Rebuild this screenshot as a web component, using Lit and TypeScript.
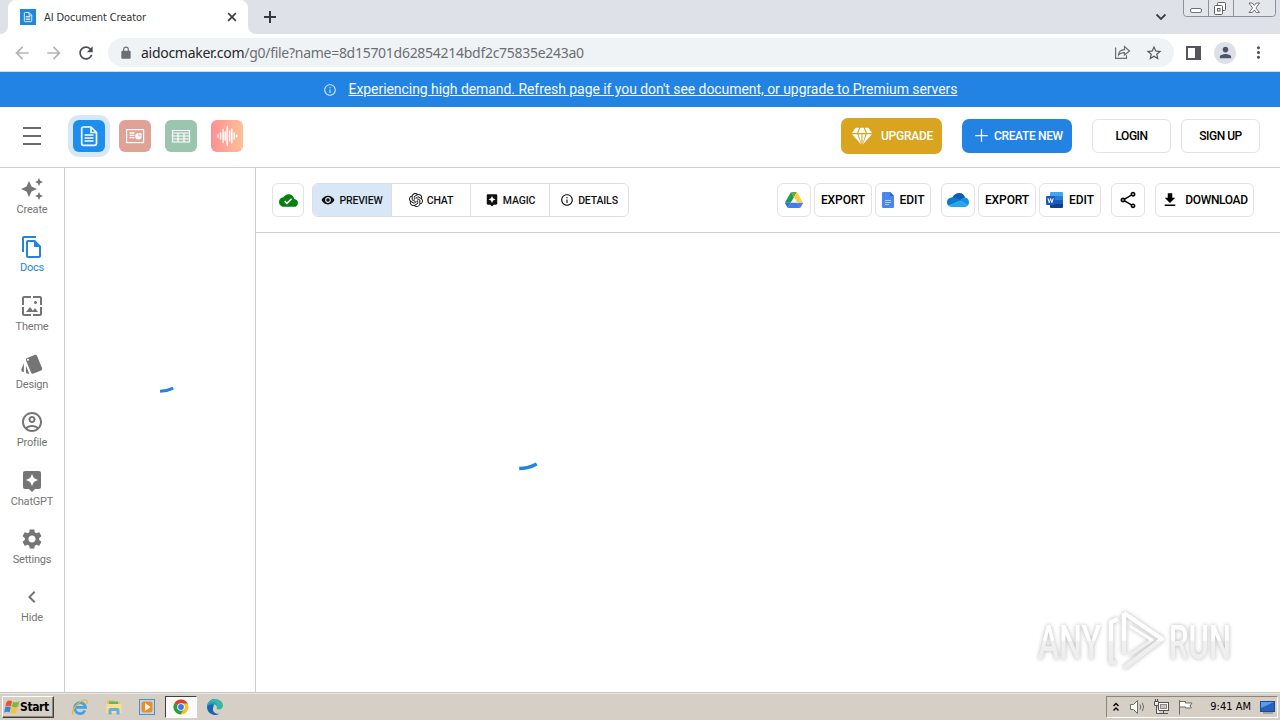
import { LitElement, html, css, svg, TemplateResult } from 'lit';
import { customElement, property } from 'lit/decorators.js';
import { classMap } from 'lit/directives/class-map.js';

const paths: Record<string, string> = {
  create:
    'M19 9l1.25-2.75L23 5l-2.75-1.25L19 1l-1.25 2.75L15 5l2.75 1.25L19 9zm-7.5.5L9 4 6.5 9.5 1 12l5.5 2.5L9 20l2.5-5.5L17 12l-5.5-2.5zM19 15l-1.25 2.75L15 19l2.75 1.25L19 23l1.25-2.75L23 19l-2.75-1.25L19 15z',
  docs: 'M16 1H4c-1.1 0-2 .9-2 2v14h2V3h12V1zm-1 4H8c-1.1 0-1.99.9-1.99 2L6 21c0 1.1.89 2 1.99 2H19c1.1 0 2-.9 2-2V11l-6-6zM8 21V7h6v5h5v9H8z',
  theme:
    'M4 4h7V2H4c-1.1 0-2 .9-2 2v7h2V4zm6 9l-4 5h12l-3-4-2.03 2.71L10 13zm7-4.5c0-.83-.67-1.5-1.5-1.5S14 7.67 14 8.5s.67 1.5 1.5 1.5S17 9.33 17 8.5zM20 2h-7v2h7v7h2V4c0-1.1-.9-2-2-2zm0 18h-7v2h7c1.1 0 2-.9 2-2v-7h-2v7zM4 13H2v7c0 1.1.9 2 2 2h7v-2H4v-7z',
  design:
    'M2.53 19.65l1.34.56v-9.03l-2.43 5.86c-.41 1.02.08 2.19 1.09 2.61zm19.5-3.7L17.07 3.98c-.31-.75-1.04-1.21-1.81-1.23-.26 0-.53.04-.79.15L7.1 5.95c-.75.31-1.21 1.03-1.23 1.8-.01.27.04.54.15.8l4.96 11.97c.31.76 1.05 1.22 1.83 1.23.26 0 .52-.05.77-.15l7.36-3.05c1.02-.42 1.51-1.59 1.09-2.6zM7.88 8.75c-.55 0-1-.45-1-1s.45-1 1-1 1 .45 1 1-.45 1-1 1zm-2 11c0 1.1.9 2 2 2h1.45l-3.45-8.34v6.34z',
  profile:
    'M12 2C6.48 2 2 6.48 2 12s4.48 10 10 10 10-4.48 10-10S17.52 2 12 2zM7.35 18.5C8.66 17.56 10.26 17 12 17s3.34.56 4.65 1.5c-1.31.94-2.91 1.5-4.65 1.5s-3.34-.56-4.65-1.5zm10.79-1.38C16.45 15.8 14.32 15 12 15s-4.45.8-6.14 2.12C4.7 15.73 4 13.95 4 12c0-4.42 3.58-8 8-8s8 3.58 8 8c0 1.95-.7 3.73-1.86 5.12zM12 6c-1.93 0-3.5 1.57-3.5 3.5S10.07 13 12 13s3.5-1.57 3.5-3.5S13.93 6 12 6zm0 5c-.83 0-1.5-.67-1.5-1.5S11.17 8 12 8s1.5.67 1.5 1.5S12.83 11 12 11z',
  assistant:
    'M19 2H5c-1.1 0-2 .9-2 2v14c0 1.1.9 2 2 2h4l3 3 3-3h4c1.1 0 2-.9 2-2V4c0-1.1-.9-2-2-2zm-5.12 10.88L12 17l-1.88-4.12L6 11l4.12-1.88L12 5l1.88 4.12L18 11l-4.12 1.88z',
  settings:
    'M19.14 12.94c.04-.3.06-.61.06-.94 0-.32-.02-.64-.07-.94l2.03-1.58c.18-.14.23-.41.12-.61l-1.92-3.32c-.12-.22-.37-.29-.59-.22l-2.39.96c-.5-.38-1.03-.7-1.62-.94l-.36-2.54c-.04-.24-.24-.41-.48-.41h-3.84c-.24 0-.43.17-.47.41l-.36 2.54c-.59.24-1.13.57-1.62.94l-2.39-.96c-.22-.08-.47 0-.59.22L2.74 8.87c-.12.21-.08.47.12.61l2.03 1.58c-.05.3-.09.63-.09.94s.02.64.07.94l-2.03 1.58c-.18.14-.23.41-.12.61l1.92 3.32c.12.22.37.29.59.22l2.39-.96c.5.38 1.03.7 1.62.94l.36 2.54c.05.24.24.41.48.41h3.84c.24 0 .44-.17.47-.41l.36-2.54c.59-.24 1.13-.56 1.62-.94l2.39.96c.22.08.47 0 .59-.22l1.92-3.32c.12-.22.07-.47-.12-.61l-2.01-1.58zM12 15.6c-1.98 0-3.6-1.62-3.6-3.6s1.62-3.6 3.6-3.6 3.6 1.62 3.6 3.6-1.62 3.6-3.6 3.6z',
  hide: 'M15.41 7.41L14 6l-6 6 6 6 1.41-1.41L10.83 12z',
  eye: 'M12 4.5C7 4.5 2.73 7.61 1 12c1.73 4.39 6 7.5 11 7.5s9.27-3.11 11-7.5c-1.73-4.39-6-7.5-11-7.5zM12 17c-2.76 0-5-2.24-5-5s2.24-5 5-5 5 2.24 5 5-2.24 5-5 5zm0-8c-1.66 0-3 1.34-3 3s1.34 3 3 3 3-1.34 3-3-1.34-3-3-3z',
  info: 'M11 7h2v2h-2zm0 4h2v6h-2zm1-9C6.48 2 2 6.48 2 12s4.48 10 10 10 10-4.48 10-10S17.52 2 12 2zm0 18c-4.41 0-8-3.59-8-8s3.59-8 8-8 8 3.59 8 8-3.59 8-8 8z',
  cloudDone:
    'M19.35 10.04C18.67 6.59 15.64 4 12 4 9.11 4 6.6 5.64 5.35 8.04 2.34 8.36 0 10.91 0 14c0 3.31 2.69 6 6 6h13c2.76 0 5-2.24 5-5 0-2.64-2.05-4.78-4.65-4.96zM10 17l-3.5-3.5 1.41-1.41L10 14.17 15.18 9l1.41 1.41L10 17z',
  share:
    'M18 16.08c-.76 0-1.44.3-1.96.77L8.91 12.7c.05-.23.09-.46.09-.7s-.04-.47-.09-.7l7.05-4.11c.54.5 1.25.81 2.04.81 1.66 0 3-1.34 3-3s-1.34-3-3-3-3 1.34-3 3c0 .24.04.47.09.7L8.04 9.81C7.5 9.31 6.79 9 6 9c-1.66 0-3 1.34-3 3s1.34 3 3 3c.79 0 1.5-.31 2.04-.81l7.12 4.16c-.05.21-.08.43-.08.65 0 1.61 1.31 2.92 2.92 2.92s2.92-1.31 2.92-2.92c0-1.61-1.31-2.92-2.92-2.92zM18 4c.55 0 1 .45 1 1s-.45 1-1 1-1-.45-1-1 .45-1 1-1zM6 13c-.55 0-1-.45-1-1s.45-1 1-1 1 .45 1 1-.45 1-1 1zm12 7.02c-.55 0-1-.45-1-1s.45-1 1-1 1 .45 1 1-.45 1-1 1z',
  download: 'M19 9h-4V3H9v6H5l7 7 7-7zM5 18v2h14v-2H5z',
  openai:
    'M22.2819 9.8211a5.9847 5.9847 0 0 0-.5157-4.9108 6.0462 6.0462 0 0 0-6.5098-2.9A6.0651 6.0651 0 0 0 4.9807 4.1818a5.9847 5.9847 0 0 0-3.9977 2.9 6.0462 6.0462 0 0 0 .7427 7.0966 5.98 5.98 0 0 0 .511 4.9107 6.051 6.051 0 0 0 6.5146 2.9001A5.9847 5.9847 0 0 0 13.2599 24a6.0557 6.0557 0 0 0 5.7718-4.2058 5.9894 5.9894 0 0 0 3.9977-2.9001 6.0557 6.0557 0 0 0-.7475-7.0729zm-9.022 12.6081a4.4755 4.4755 0 0 1-2.8764-1.0408l.1419-.0804 4.7783-2.7582a.7948.7948 0 0 0 .3927-.6813v-6.7369l2.02 1.1686a.071.071 0 0 1 .038.052v5.5826a4.504 4.504 0 0 1-4.4945 4.4944zm-9.6607-4.1254a4.4708 4.4708 0 0 1-.5346-3.0137l.142.0852 4.783 2.7582a.7712.7712 0 0 0 .7806 0l5.8428-3.3685v2.3324a.0804.0804 0 0 1-.0332.0615L9.74 19.9502a4.4992 4.4992 0 0 1-6.1408-1.6464zM2.3408 7.8956a4.485 4.485 0 0 1 2.3655-1.9728V11.6a.7664.7664 0 0 0 .3879.6765l5.8144 3.3543-2.0201 1.1685a.0757.0757 0 0 1-.071 0l-4.8303-2.7865A4.504 4.504 0 0 1 2.3408 7.872zm16.5963 3.8558L13.1038 8.364 15.1192 7.2a.0757.0757 0 0 1 .071 0l4.8303 2.7913a4.4944 4.4944 0 0 1-.6765 8.1042v-5.6772a.79.79 0 0 0-.407-.667zm2.0107-3.0231l-.142-.0852-4.7735-2.7818a.7759.7759 0 0 0-.7854 0L9.409 9.2297V6.8974a.0662.0662 0 0 1 .0284-.0615l4.8303-2.7866a4.4992 4.4992 0 0 1 6.6802 4.66zM8.3065 12.863l-2.02-1.1638a.0804.0804 0 0 1-.038-.0567V6.0742a4.4992 4.4992 0 0 1 7.3757-3.4537l-.142.0805L8.704 5.459a.7948.7948 0 0 0-.3927.6813zm1.0976-2.3654l2.602-1.4998 2.6069 1.4998v2.9994l-2.5974 1.4997-2.6067-1.4997Z',
  diamond:
    'M5.2 3h3.6L6.6 8.6H1zM10.2 3h3.6l2.3 5.6H7.9zM15.2 3h3.6L23 8.6h-5.6zM1.2 10h5.6L11.3 21.5zM8.2 10h3.2v10.5zM12.6 10h3.2l-3.2 10.5zM17.2 10h5.6L12.7 21.5z',
  plus: 'M11 2h2v9h9v2h-9v9h-2v-9H2v-2h9z',
  refresh:
    'M17.65 6.35C16.2 4.9 14.21 4 12 4c-4.42 0-7.99 3.58-7.99 8s3.57 8 7.99 8c3.73 0 6.84-2.55 7.73-6h-2.08c-.82 2.33-3.04 4-5.65 4-3.31 0-6-2.69-6-6s2.69-6 6-6c1.66 0 3.14.69 4.22 1.78L13 11h7V4l-2.35 2.35z',
  back: 'M20 11H7.83l5.59-5.59L12 4l-8 8 8 8 1.41-1.41L7.83 13H20v-2z',
  forward: 'M12 4l-1.41 1.41L16.17 11H4v2h12.17l-5.58 5.59L12 20l8-8z',
  lock: 'M18 8h-1V6c0-2.76-2.24-5-5-5S7 3.24 7 6v2H6c-1.1 0-2 .9-2 2v10c0 1.1.9 2 2 2h12c1.1 0 2-.9 2-2V10c0-1.1-.9-2-2-2zM9 6c0-1.66 1.34-3 3-3s3 1.34 3 3v2H9V6z',
  star: 'M22 9.24l-7.19-.62L12 2 9.19 8.63 2 9.24l5.46 4.73L5.82 21 12 17.27 18.18 21l-1.63-7.03L22 9.24zM12 15.4l-3.76 2.27 1-4.28-3.32-2.88 4.38-.38L12 6.1l1.71 4.04 4.38.38-3.32 2.88 1 4.28L12 15.4z',
  person:
    'M12 12c2.21 0 4-1.79 4-4s-1.79-4-4-4-4 1.79-4 4 1.79 4 4 4zm0 2c-2.67 0-8 1.34-8 4v2h16v-2c0-2.66-5.33-4-8-4z',
  more: 'M12 8c1.1 0 2-.9 2-2s-.9-2-2-2-2 .9-2 2 .9 2 2 2zm0 2c-1.1 0-2 .9-2 2s.9 2 2 2 2-.9 2-2-.9-2-2-2zm0 6c-1.1 0-2 .9-2 2s.9 2 2 2 2-.9 2-2-.9-2-2-2z',
};

const icon = (name: string, size = 24) =>
  svg`<svg width=${size} height=${size} viewBox="0 0 24 24" fill="currentColor"><path d=${paths[name]}></path></svg>`;

const docGlyph = svg`
  <path d="M10.500 7h7.500l5.500 5.500v11a1.800 1.800 0 0 1-1.800 1.800H10.500a1.800 1.800 0 0 1-1.800-1.800V8.800A1.800 1.800 0 0 1 10.500 7z" fill="none" stroke="#fff" stroke-width="1.700" stroke-linejoin="round" />
  <path d="M18 7v5.500H23.500M11.500 15h9M11.500 18h9M11.500 21h9" fill="none" stroke="#fff" stroke-width="1.600" />`;

const driveLogo = html`<svg width="18" height="16" viewBox="0 0 87.3 78">
  <path d="m6.6 66.85 3.85 6.65c.8 1.4 1.95 2.5 3.3 3.3l13.75-23.8h-27.5c0 1.55.4 3.1 1.2 4.5z" fill="#2f6fe0"/>
  <path d="m43.65 25-13.75-23.8c-1.35.8-2.5 1.9-3.3 3.3l-25.4 44a9.06 9.06 0 0 0 -1.2 4.5h27.5z" fill="#1c9b51"/>
  <path d="m73.55 76.8c1.35-.8 2.5-1.9 3.3-3.3l1.6-2.75 7.65-13.25c.8-1.4 1.2-2.95 1.2-4.5h-27.5l5.85 11.5z" fill="#4a7fe0"/>
  <path d="m43.65 25 13.75-23.8c-1.35-.8-2.9-1.2-4.5-1.2h-18.5c-1.6 0-3.15.45-4.5 1.2z" fill="#6aa53c"/>
  <path d="m59.8 53h-32.3l-13.75 23.8c1.35.8 2.9 1.2 4.5 1.2h50.8c1.6 0 3.15-.45 4.5-1.2z" fill="#3f7ef0"/>
  <path d="m73.4 26.5-12.7-22c-.8-1.4-1.95-2.5-3.3-3.3l-13.75 23.8 16.15 28h27.45c0-1.55-.4-3.1-1.2-4.5z" fill="#ffcd40"/>
</svg>`;

const gdocLogo = html`<svg width="12" height="16" viewBox="0 0 12 16">
  <path d="M1 0h7l4 4v11a1 1 0 0 1-1 1H1a1 1 0 0 1-1-1V1a1 1 0 0 1 1-1z" fill="#4a86f0"/>
  <path d="M8 0l4 4H8z" fill="#2d62c8"/>
  <path d="M3 8.5h6M3 10.5h6M3 12.5h4" stroke="#b4cefa" stroke-width="1"/>
</svg>`;

const oneDriveLogo = html`<svg width="22" height="14" viewBox="0 0 22 14">
  <path d="M5 5C6.5 1.5 9.5 0 12.2 0c3 0 5.2 1.8 6 4.6L12 8z" fill="#0a5fb4"/>
  <path d="M5.5 4.3C2.2 4.5 0 6.7 0 9.2c0 1.5.6 2.7 1.6 3.6L14 7.5 9.5 4.9C8.3 4.3 7 4.1 5.5 4.3z" fill="#0d78cf"/>
  <path d="M18 4.5c2.4.2 4 2.3 4 4.7 0 1.2-.3 2.2-1 3L12.500 7.8 15 5.3c.9-.6 1.9-.9 3-.8z" fill="#168fe0"/>
  <path d="M1.6 12.7L12.7 7.7l8.4 4.5A4 4 0 0 1 18 14H5a5 5 0 0 1-3.4-1.3z" fill="#27a4ee"/>
</svg>`;

const wordLogo = html`<svg width="17" height="16" viewBox="0 0 17 16">
  <path d="M5 0h11a1 1 0 0 1 1 1v3H4V1a1 1 0 0 1 1-1z" fill="#41a5ee"/>
  <path d="M4 4h13v4H4z" fill="#2b7cd3"/>
  <path d="M4 8h13v4H4z" fill="#185abd"/>
  <path d="M4 12h13v3a1 1 0 0 1-1 1H5a1 1 0 0 1-1-1z" fill="#103f91"/>
  <rect y="4" width="9" height="9" rx="1" fill="#185abd"/>
  <path d="M2 6.3l1.300 4.500 1.300-4.300 1.300 4.300L7.200 6.300" fill="none" stroke="#fff" stroke-width="1"/>
</svg>`;

const navItems = [
  { icon: 'create', label: 'Create' },
  { icon: 'docs', label: 'Docs', active: true },
  { icon: 'theme', label: 'Theme' },
  { icon: 'design', label: 'Design' },
  { icon: 'profile', label: 'Profile' },
  { icon: 'assistant', label: 'ChatGPT' },
  { icon: 'settings', label: 'Settings' },
  { icon: 'hide', label: 'Hide' },
];

@customElement('browser-chrome')
export class BrowserChrome extends LitElement {
  static styles = css`
    :host {
      display: block;
      color: #3c4043;
      font-family: 'DejaVu Sans Condensed', 'DejaVu Sans', sans-serif;
      font-stretch: condensed;
    }
    svg {
      display: block;
      flex: none;
    }
    .strip {
      display: flex;
      height: 34px;
      background: #dee1e8;
    }
    .edge {
      width: 8px;
      background: #fff;
    }
    .edge i {
      display: block;
      height: 34px;
      border-bottom-right-radius: 8px;
      background: #dee1e8;
    }
    .edge.after i {
      border-radius: 0 0 0 8px;
    }
    .tab {
      display: flex;
      align-items: center;
      box-sizing: border-box;
      width: 240px;
      height: 34px;
      padding: 0 11px 0 12px;
      border-radius: 8px 8px 0 0;
      background: #fff;
      font-size: 11px;
    }
    .tab .title {
      flex: 1;
      margin-left: 8px;
      letter-spacing: -0.12px;
      color: #2f3236;
    }
    .add {
      margin: 11px 0 0 8px;
    }
    .chevron {
      margin: 12px 0 0 auto;
    }
    .window {
      display: flex;
      margin: 0 4px 0 16px;
    }
    .bar {
      display: flex;
      align-items: center;
      box-sizing: border-box;
      height: 38px;
      padding: 0 12px;
      border-bottom: 1px solid #d5d9de;
      background: #fff;
    }
    .nav {
      display: flex;
      gap: 12px;
      color: #4a4d51;
    }
    .nav .off {
      color: #b3b5b8;
    }
    .url {
      display: flex;
      align-items: center;
      flex: 1;
      height: 29px;
      margin: 0 12px 0 12px;
      padding: 0 11px 0 11px;
      border-radius: 15px;
      background: #f0f3f6;
      color: #6b6f73;
      font-family: 'Noto Sans', sans-serif;
      font-stretch: normal;
      font-size: 14px;
      white-space: nowrap;
    }
    .url b {
      font-weight: normal;
      color: #26282b;
    }
    .address {
      flex: 1;
      margin-left: 8px;
      letter-spacing: -0.28px;
    }
    .tools {
      display: flex;
      gap: 14px;
      color: #55585d;
    }
    .extras {
      display: flex;
      align-items: center;
      gap: 13px;
      color: #50525a;
    }
    .avatar {
      display: grid;
      place-items: center;
      width: 22px;
      height: 22px;
      border-radius: 50%;
      background: #dde1e7;
      color: #4d536b;
    }
  `;

  render() {
    return html`
      <div class="strip">
        <div class="edge"><i></i></div>
        <div class="tab">
          <svg width="16" height="16" viewBox="0 0 32 32">
            <rect width="32" height="32" fill="#1f87e0" />
            ${docGlyph}
          </svg>
          <span class="title">AI Document Creator</span>
          <svg width="10" height="10" viewBox="0 0 10 10">
            <path d="M1.200 1.200l7.600 7.600M8.800 1.200L1.200 8.800" stroke="#3c4043" stroke-width="1.700" />
          </svg>
        </div>
        <div class="edge after"><i></i></div>
        <svg class="add" width="12" height="12" viewBox="0 0 12 12">
          <path d="M6 0v12M0 6h12" stroke="#34373b" stroke-width="2" />
        </svg>
        <svg class="chevron" width="12" height="10" viewBox="0 0 12 10">
          <path d="M1.500 2.500L6 7l4.500-4.500" fill="none" stroke="#3c4043" stroke-width="1.800" />
        </svg>
        <svg class="window" width="93" height="18" viewBox="0 0 93 18">
          <path d="M.5 0v13.500a3 3 0 0 0 3 3h86a3 3 0 0 0 3-3V0M25.500 0v16M50.500 0v16" fill="#e3e6ea" stroke="#8b929b" />
          <rect x="7.500" y="8.500" width="11" height="4" rx="1.500" fill="#fff" stroke="#6d727a" />
          <g fill="#fff" stroke="#5c6169">
            <rect x="34.500" y="2.500" width="8" height="8" rx="1" />
            <rect x="31.500" y="5.500" width="8" height="9" rx="1" />
            <rect x="34.500" y="8.500" width="2.500" height="2.500" />
            <path d="M66 3h3.300l2 2.500 2-2.500h3.200l-3.600 5 3.600 4.500h-3.200l-2-2.500-2 2.500H66l3.600-4.500z" stroke-width=".9" />
          </g>
        </svg>
      </div>
      <div class="bar">
        <div class="nav">
          <span class="off">${icon('back', 20)}</span>
          <span class="off">${icon('forward', 20)}</span>
          <span>${icon('refresh', 20)}</span>
        </div>
        <div class="url">
          ${icon('lock', 14)}
          <span class="address"><b>aidocmaker.com</b>/g0/file?name=8d15701d62854214bdf2c75835e243a0</span>
          <div class="tools">
            <svg width="17" height="16" viewBox="0 0 17 16" fill="none" stroke="#6a6d72" stroke-width="1.200">
              <path d="M1.600 3.500v10.800h10.900v-3" />
              <path d="M4.500 11c.2-3.500 2.500-5.200 6-5.400V2.500l5 4.500-5 4V8.600c-3 0-4.700.7-6 2.400z" />
            </svg>
            ${icon('star', 18)}
          </div>
        </div>
        <div class="extras">
          <svg width="15" height="14" viewBox="0 0 15 14">
            <rect x="1" y="1" width="13" height="12" fill="#fff" stroke="#54565c" stroke-width="2" />
            <rect x="9" y="1" width="5" height="12" fill="#54565c" />
          </svg>
          <span class="avatar">${icon('person', 17)}</span>
          ${icon('more', 19)}
        </div>
      </div>
    `;
  }
}

@customElement('tool-button')
export class ToolButton extends LitElement {
  @property()
  label = '';

  @property({ type: Number })
  width = 34;

  @property({ attribute: false })
  icon?: TemplateResult;

  static styles = css`
    :host {
      display: block;
    }
    button {
      display: flex;
      align-items: center;
      justify-content: center;
      gap: 6px;
      box-sizing: border-box;
      height: 34px;
      padding: 0;
      border: 1px solid #e3e3e3;
      border-radius: 6px;
      background: #fff;
      color: #000;
      font: 500 12px Roboto, sans-serif;
      letter-spacing: var(--label-spacing, -0.1px);
      white-space: nowrap;
    }
    svg {
      display: block;
      flex: none;
    }
  `;

  render() {
    return html`<button style="width: ${this.width}px">${this.icon}${this.label}</button>`;
  }
}

@customElement('win-taskbar')
export class WinTaskbar extends LitElement {
  static styles = css`
    :host {
      display: flex;
      align-items: center;
      box-sizing: border-box;
      height: 28px;
      padding: 2px 2px 2px;
      border-top: 1px solid #c4c4c4;
      background: #d6cfc6;
      box-shadow: inset 0 1px #ece9e4;
      color: #000;
      font-family: 'DejaVu Sans Condensed', 'DejaVu Sans', sans-serif;
      font-stretch: condensed;
      font-size: 11px;
    }
    svg {
      display: block;
      flex: none;
    }
    .start {
      display: flex;
      align-items: center;
      box-sizing: border-box;
      width: 52px;
      height: 22px;
      padding-left: 1px;
      border: 1px solid;
      border-color: #fff #404040 #404040 #fff;
      box-shadow: inset -1px -1px #8a857d;
      font-weight: bold;
      font-size: 12px;
      letter-spacing: -0.4px;
    }
    .apps {
      display: flex;
      align-items: center;
      margin-left: 10px;
    }
    .app {
      display: grid;
      place-items: center;
      box-sizing: border-box;
      width: 32px;
      height: 22px;
      margin-right: 1.7px;
    }
    .app.open {
      border: 1px solid;
      border-color: #404040 #fff #fff #404040;
      background: #fbfaf9;
    }
    .tray {
      display: flex;
      align-items: center;
      box-sizing: border-box;
      width: 172px;
      height: 22px;
      margin-left: auto;
      padding: 0 0 0 6px;
      border: 1px solid;
      border-color: #8a857d #fff #fff #8a857d;
    }
    .tray .wide {
      margin-left: 10px;
    }
    .tray .glyph {
      margin-left: 6px;
    }
    .time {
      margin: 0 8px 0 auto;
    }
  `;

  render() {
    return html`
      <div class="start">
        <svg width="16" height="16" viewBox="0 0 16 16">
          <path d="M2.500 3C4.500 1 6 1.300 8 2.300L7 7.500C5 6.500 3.500 6.500 1.300 7.700z" fill="#e8562a" />
          <path d="M9 2.700c2 1 3.700 1 6.500-.5l-1.500 5.300C12 8.800 10 8.700 7.800 7.700z" fill="#7cb83a" />
          <path d="M1.100 8.500c2-1.200 3.700-1.200 5.700-.2l-1.200 5.300c-2-1-3.500-1-5.500.2z" fill="#3a85d8" />
          <path d="M7.600 8.500c2 1 3.900 1 6.200-.1l-1.400 5.200c-2 1.200-3.700 1-5.900.1z" fill="#f7c32e" />
        </svg>
        <span>Start</span>
      </div>
      <div class="apps">
        <div class="app">
          <svg width="18" height="18" viewBox="0 0 18 18" fill="none">
            <path d="M14 12.500a5.500 5.500 0 1 1 .5-3.200H5" stroke="#3fa5e0" stroke-width="2.800" />
            <path d="M2 16.500C-.5 14 6 4 13 2c4-1 3.500 2 2.500 4" stroke="#eab63a" stroke-width="1.300" />
          </svg>
        </div>
        <div class="app">
          <svg width="18" height="18" viewBox="0 0 18 18">
            <path d="M2 4l1-2h5l1 1.500h6V14H2z" fill="#e9c257" />
            <path d="M4 3.500h9v3H4z" fill="#5fb56a" />
            <path d="M1.500 6h15v9h-15z" fill="#f8e08e" />
            <path d="M3.500 16.500v-4.500a2 2 0 0 1 2-2h7a2 2 0 0 1 2 2v4.500h-3V13h-5v3.500z" fill="#67aede" />
          </svg>
        </div>
        <div class="app">
          <svg width="16" height="16" viewBox="0 0 16 16">
            <rect x=".5" y=".5" width="15" height="15" fill="#b9daf4" stroke="#4f8fc8" />
            <rect x="2.500" y="2.500" width="11" height="11" rx="2" fill="#f58a1f" />
            <path d="M6 4l5.500 4L6 12z" fill="#fff" />
          </svg>
        </div>
        <div class="app open">
          <svg width="16" height="16" viewBox="0 0 16 16">
            <circle cx="8" cy="8" r="7.500" fill="#f6c327" />
            <path d="M8 8L1.500 4.200A7.500 7.500 0 0 1 14.600 4.400L8 4.400z" fill="#dd3f32" />
            <path d="M1.500 4.200A7.500 7.500 0 0 0 7.600 15.500L11 10 8 8z" fill="#2c9c50" />
            <circle cx="8" cy="8" r="3.800" fill="#fff" />
            <circle cx="8" cy="8" r="2.900" fill="#3b7be6" />
          </svg>
        </div>
        <div class="app">
          <svg width="16" height="16" viewBox="0 0 16 16">
            <path d="M8 0a8 8 0 0 0-8 8 8 8 0 0 0 12.500 6.600C9 15.500 5.500 13 6 9.500z" fill="#1567b5" />
            <path d="M.2 7C1 3 4 0 8 0c4.500 0 8 3 8 6.500C16 9 14 10.500 11.800 10.500c-1.500 0-2.500-.6-2-1.500C10.500 7.500 9 5.500 6.500 5.200 4 5 1.500 5.500.2 7z" fill="#35b8a0" />
            <path d="M.2 7C1.500 3.500 5 2.500 7.500 3.500 9.500 4.400 10 6 10 7.500 9 5.500 7.500 5 6 5 3.500 5 1.500 5.500.2 7z" fill="#2496d8" />
          </svg>
        </div>
      </div>
      <div class="tray">
        <svg width="6" height="10" viewBox="0 0 6 10" fill="none" stroke="#000" stroke-width="1.400">
          <path d="M.5 4L3 1.500 5.500 4M.5 8.500L3 6l2.500 2.500" />
        </svg>
        <svg class="wide" width="18" height="16" viewBox="0 0 18 16" fill="#fff" stroke="#6f6c67">
          <path d="M1.500 5.500h3l4-4v13l-4-4h-3z" />
          <path d="M11 5.500q1.500 2.500 0 5M13.300 3.800q2.600 4.200 0 8.400" fill="none" />
        </svg>
        <svg class="glyph" width="18" height="16" viewBox="0 0 18 16" fill="#eee" stroke="#55534f">
          <rect x="5.500" y="3.500" width="10" height="8" fill="#fff" />
          <rect x="7.500" y="5.500" width="6" height="4" fill="#c9c5bf" stroke="#8f8b85" />
          <path d="M7 14.500h8M10.500 12v2" />
          <path d="M1.500 2.500h4v4h-4zM2.500 0v2M4.500 0v2M3.500 7v7.500H7" />
        </svg>
        <svg class="glyph" width="17" height="16" viewBox="0 0 17 16" fill="#fff" stroke="#6f6c67">
          <path d="M2.500 1v14.500M2.500 2.500h6v1.500h6.500l-2 3 1.500 2H8.500V8h-6z" />
        </svg>
        <span class="time">9:41 AM</span>
        <svg width="18" height="14" viewBox="0 0 18 14">
          <rect x="1.500" y="1.500" width="14" height="10" fill="#2462bd" stroke="#1c4a94" />
          <path d="M2 2h13L2 8z" fill="#5c9bea" />
          <path d="M4 13h10" stroke="#777" />
        </svg>
      </div>
    `;
  }
}

@customElement('app-root')
export class AppRoot extends LitElement {
  static styles = css`
    :host {
      display: flex;
      flex-direction: column;
      position: relative;
      width: 1280px;
      height: 720px;
      overflow: hidden;
      background: #fff;
      font-family: Roboto, sans-serif;
    }
    svg {
      display: block;
      flex: none;
    }
    .banner {
      display: flex;
      align-items: center;
      justify-content: center;
      gap: 12px;
      height: 35px;
      background: #2383e2;
      color: #c4e4ff;
      font-size: 14px;
    }
    .banner a {
      margin-top: -1px;
      color: #f2faff;
      text-decoration: underline;
      letter-spacing: -0.06px;
    }
    header {
      display: flex;
      align-items: center;
      box-sizing: border-box;
      height: 61px;
      padding: 0 20px 3px 22px;
      border-bottom: 1px solid #cfcfcf;
      --label-spacing: -0.5px;
    }
    .apps {
      display: flex;
      gap: 14px;
      margin-left: 31px;
    }
    .app {
      display: block;
      width: 32px;
      height: 32px;
      border-radius: 6px;
      overflow: hidden;
    }
    .app.active {
      background: #1b8eee;
      box-shadow: 0 0 0 5px #d6e7f8;
    }
    .slides {
      background: #e0a297;
    }
    .sheets {
      background: #9cc5af;
    }
    .audio {
      background: linear-gradient(90deg, #ff8f96, #ffc094);
    }
    .actions {
      display: flex;
      align-items: center;
      margin-left: auto;
    }
    .cta {
      display: flex;
      align-items: center;
      box-sizing: border-box;
      border: none;
      border-radius: 7px;
      color: #fff;
      font: 500 12px Roboto, sans-serif;
      white-space: nowrap;
    }
    .upgrade {
      gap: 8px;
      width: 101px;
      height: 36px;
      padding: 0 0 0 10px;
      background: #d9a520;
      letter-spacing: -0.25px;
    }
    .new {
      gap: 5px;
      width: 110px;
      height: 34px;
      margin: 0 20px;
      padding: 0 0 0 12px;
      background: #2383e2;
      letter-spacing: -0.35px;
    }
    .actions tool-button + tool-button {
      margin-left: 10px;
    }
    .body {
      display: flex;
      flex: 1;
      min-height: 0;
    }
    nav {
      box-sizing: border-box;
      width: 65px;
      padding-top: 9px;
      border-right: 1px solid #cfcfcf;
    }
    .item {
      display: flex;
      flex-direction: column;
      align-items: center;
      gap: 1px;
      height: 58.35px;
      color: #757575;
      font-size: 11px;
      line-height: 16px;
      letter-spacing: -0.2px;
    }
    .item.active {
      color: #2383e2;
    }
    .pages {
      box-sizing: border-box;
      width: 191px;
      padding: 217px 0 0 94px;
      border-right: 1px solid #cfcfcf;
    }
    main {
      flex: 1;
    }
    .toolbar {
      display: flex;
      align-items: center;
      box-sizing: border-box;
      height: 65px;
      padding: 0 26px 0 16px;
      border-bottom: 1px solid #cfcfcf;
    }
    .toolbar .download {
      --label-spacing: -0.35px;
    }
    .cloud {
      margin-right: 8px;
    }
    .tabs {
      display: flex;
      box-sizing: border-box;
      width: 317px;
      height: 34px;
      border: 1px solid #dedede;
      border-radius: 6px;
      overflow: hidden;
    }
    .tabs button {
      display: flex;
      align-items: center;
      justify-content: center;
      gap: 4px;
      flex: 1;
      padding: 0;
      border: none;
      border-right: 1px solid #dedede;
      background: #fff;
      color: #111;
      font: 500 10.5px Roboto, sans-serif;
      letter-spacing: -0.15px;
    }
    .tabs button:last-child {
      border-right: none;
    }
    .tabs .active {
      background: #d7e7f7;
    }
    .export {
      display: flex;
      gap: 3px;
      margin-left: auto;
    }
    .export + .export,
    .export ~ tool-button {
      margin-left: 10px;
    }
    .canvas {
      padding: 227px 0 0 262px;
    }
    .watermark {
      position: absolute;
      left: 1030px;
      top: 602px;
      filter: drop-shadow(0 0 2px rgba(0, 0, 0, 0.38));
      opacity: 0.75;
      overflow: visible;
    }
    .watermark text {
      font-family: Roboto, sans-serif;
      font-weight: 500;
      font-size: 49px;
    }
  `;

  private renderApps() {
    return html`
      <div class="apps">
        <div class="app active">
          <svg width="32" height="32" viewBox="0 0 32 32">${docGlyph}</svg>
        </div>
        <div class="app slides">
          <svg width="32" height="32" viewBox="0 0 32 32">
            <rect x="7.600" y="9.600" width="17" height="13" fill="none" stroke="#fff" stroke-width="1.200" />
            <path d="M10.500 13h5M10.500 15.300h5M10.500 17.600h5" stroke="#fff" stroke-width="1.300" />
            <path d="M19.500 13a3.200 3.200 0 1 0 3.200 3.200H19.500z" fill="#fff" />
            <path d="M20.200 12.700v2.800h2.800a2.800 2.800 0 0 0-2.800-2.800z" fill="#fff" />
          </svg>
        </div>
        <div class="app sheets">
          <svg width="32" height="32" viewBox="0 0 32 32" fill="none" stroke="#fff" stroke-width="1.200">
            <path d="M7.500 10.500h17v11.500h-17zM7.500 13h17M7.500 16h17M7.500 19h17M13 13v9M19 13v9" />
          </svg>
        </div>
        <div class="app audio">
          <svg width="32" height="32" viewBox="0 0 32 32" stroke="#fff" stroke-width="1.500" stroke-linecap="round">
            <path d="M7 15v2M9.600 13v6M12.200 9.500v13M14.200 12v8M16.200 6.500v19M18.600 11v10M20.800 9v14M23.200 13v6M25.600 15v2" />
          </svg>
        </div>
      </div>
    `;
  }

  private renderToolbar() {
    return html`
      <div class="toolbar">
        <tool-button
          class="cloud"
          width="32"
          .icon=${html`<svg width="19" height="19" viewBox="0 0 24 24" fill="#07800f"><path d=${paths.cloudDone}></path></svg>`}
        ></tool-button>
        <div class="tabs">
          <button class="active">${icon('eye', 14)}PREVIEW</button>
          <button>${icon('openai', 14)}CHAT</button>
          <button>${icon('assistant', 14)}MAGIC</button>
          <button>${icon('info', 14)}DETAILS</button>
        </div>
        <div class="export">
          <tool-button .icon=${driveLogo}></tool-button>
          <tool-button width="58" label="EXPORT"></tool-button>
          <tool-button width="56" label="EDIT" .icon=${gdocLogo}></tool-button>
        </div>
        <div class="export">
          <tool-button .icon=${oneDriveLogo}></tool-button>
          <tool-button width="58" label="EXPORT"></tool-button>
          <tool-button width="62" label="EDIT" .icon=${wordLogo}></tool-button>
        </div>
        <tool-button .icon=${icon('share', 20)}></tool-button>
        <tool-button class="download" width="99" label="DOWNLOAD" .icon=${icon('download', 18)}></tool-button>
      </div>
    `;
  }

  render() {
    return html`
      <browser-chrome></browser-chrome>
      <div class="banner">
        ${icon('info', 14)}
        <a>Experiencing high demand. Refresh page if you don't see document, or upgrade to Premium servers</a>
      </div>
      <header>
        <svg width="20" height="20" viewBox="0 0 20 20">
          <path d="M1 2h18M1 10h18M1 18h18" stroke="#6b6b6b" stroke-width="2" />
        </svg>
        ${this.renderApps()}
        <div class="actions">
          <button class="cta upgrade">${icon('diamond', 22)}UPGRADE</button>
          <button class="cta new">${icon('plus', 15)}CREATE NEW</button>
          <tool-button width="79" label="LOGIN"></tool-button>
          <tool-button width="79" label="SIGN UP"></tool-button>
        </div>
      </header>
      <div class="body">
        <nav>
          ${navItems.map(
            (item) => html`
              <div class=${classMap({ item: true, active: !!item.active })}>
                ${icon(item.icon)}
                <span>${item.label}</span>
              </div>
            `
          )}
        </nav>
        <div class="pages">
          <svg width="16" height="10" viewBox="0 0 16 10">
            <path d="M1 6.300Q8 6.300 14.200 3.200" fill="none" stroke="#2383e2" stroke-width="3" />
          </svg>
        </div>
        <main>
          ${this.renderToolbar()}
          <div class="canvas">
            <svg width="22" height="12" viewBox="0 0 22 12">
              <path d="M1.200 8.500Q10.500 8.500 18.700 4" fill="none" stroke="#2383e2" stroke-width="3.500" />
            </svg>
          </div>
        </main>
      </div>
      <win-taskbar></win-taskbar>
      <svg class="watermark" width="210" height="76" viewBox="0 0 210 76">
        <defs>
          <linearGradient id="fade" x1="0" y1="0" x2="0" y2="76" gradientUnits="userSpaceOnUse">
            <stop offset="0.5" stop-color="#fff" />
            <stop offset="0.52" stop-color="#ececec" />
            <stop offset="1" stop-color="#e4e4e4" />
          </linearGradient>
        </defs>
        <g fill="url(#fade)">
          <text x="8" y="57" textLength="63" lengthAdjust="spacingAndGlyphs">ANY</text>
          <text x="139" y="57" textLength="62" lengthAdjust="spacingAndGlyphs">RUN</text>
        </g>
        <g fill="none" stroke="url(#fade)" stroke-width="4.500" stroke-linejoin="round">
          <path d="M94 11l38 26-38 29" />
          <path d="M94 11v41" />
          <path d="M88 17l-7 3v40l5 1" />
          <path d="M100 24l22 14-22 15" stroke-width="3" />
        </g>
      </svg>
    `;
  }
}
